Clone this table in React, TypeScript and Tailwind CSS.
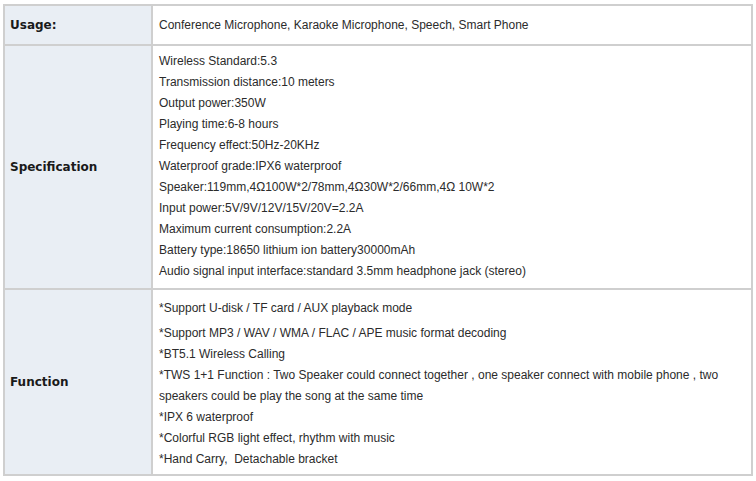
const specs = [
  "Wireless Standard:5.3",
  "Transmission distance:10 meters",
  "Output power:350W",
  "Playing time:6-8 hours",
  "Frequency effect:50Hz-20KHz",
  "Waterproof grade:IPX6 waterproof",
  "Speaker:119mm,4Ω100W*2/78mm,4Ω30W*2/66mm,4Ω 10W*2",
  "Input power:5V/9V/12V/15V/20V=2.2A",
  "Maximum current consumption:2.2A",
  "Battery type:18650 lithium ion battery30000mAh",
  "Audio signal input interface:standard 3.5mm headphone jack (stereo)",
];

const functions = [
  "*Support MP3 / WAV / WMA / FLAC / APE music format decoding",
  "*BT5.1 Wireless Calling",
  "*TWS 1+1 Function : Two Speaker could connect together , one speaker connect with mobile phone , two speakers could be play the song at the same time",
  "*IPX 6 waterproof",
  "*Colorful RGB light effect, rhythm with music",
  "*Hand Carry,  Detachable bracket",
];

function Label({ children }: { children: React.ReactNode }) {
  return (
    <div className="flex items-center bg-[#e9eef4] border-r-2 border-[#cfcfcf] pl-[5px] font-['DejaVu_Sans',sans-serif] text-[12px] font-bold text-[#1a1a1a]">
      {children}
    </div>
  );
}

export default function App() {
  return (
    <div className="w-[756px] h-[481px] bg-white pl-[3px] pt-[4px]">
      <div className="w-[750px] h-[472px] border-2 border-[#cfcfcf] flex flex-col font-['Liberation_Sans',Arial,sans-serif] text-[12px] text-[#2b2b2b]">
        <div className="grid grid-cols-[148px_1fr] h-[38px] shrink-0">
          <Label>Usage:</Label>
          <div className="flex items-center px-[6px]">
            Conference Microphone, Karaoke Microphone, Speech, Smart Phone
          </div>
        </div>

        <div className="grid grid-cols-[148px_1fr] h-[244px] shrink-0 border-t-2 border-[#cfcfcf]">
          <Label>Specification</Label>
          <div className="px-[6px] pt-[5px] leading-[21px]">
            {specs.map((s) => (
              <p key={s}>{s}</p>
            ))}
          </div>
        </div>

        <div className="grid grid-cols-[148px_1fr] flex-1 border-t-2 border-[#cfcfcf]">
          <Label>Function</Label>
          <div className="px-[6px] pt-[8px] leading-[21px]">
            <p className="mb-[4px]">*Support U-disk / TF card / AUX playback mode</p>
            {functions.map((f) => (
              <p key={f} className="whitespace-pre-wrap">{f}</p>
            ))}
          </div>
        </div>
      </div>
    </div>
  );
}
